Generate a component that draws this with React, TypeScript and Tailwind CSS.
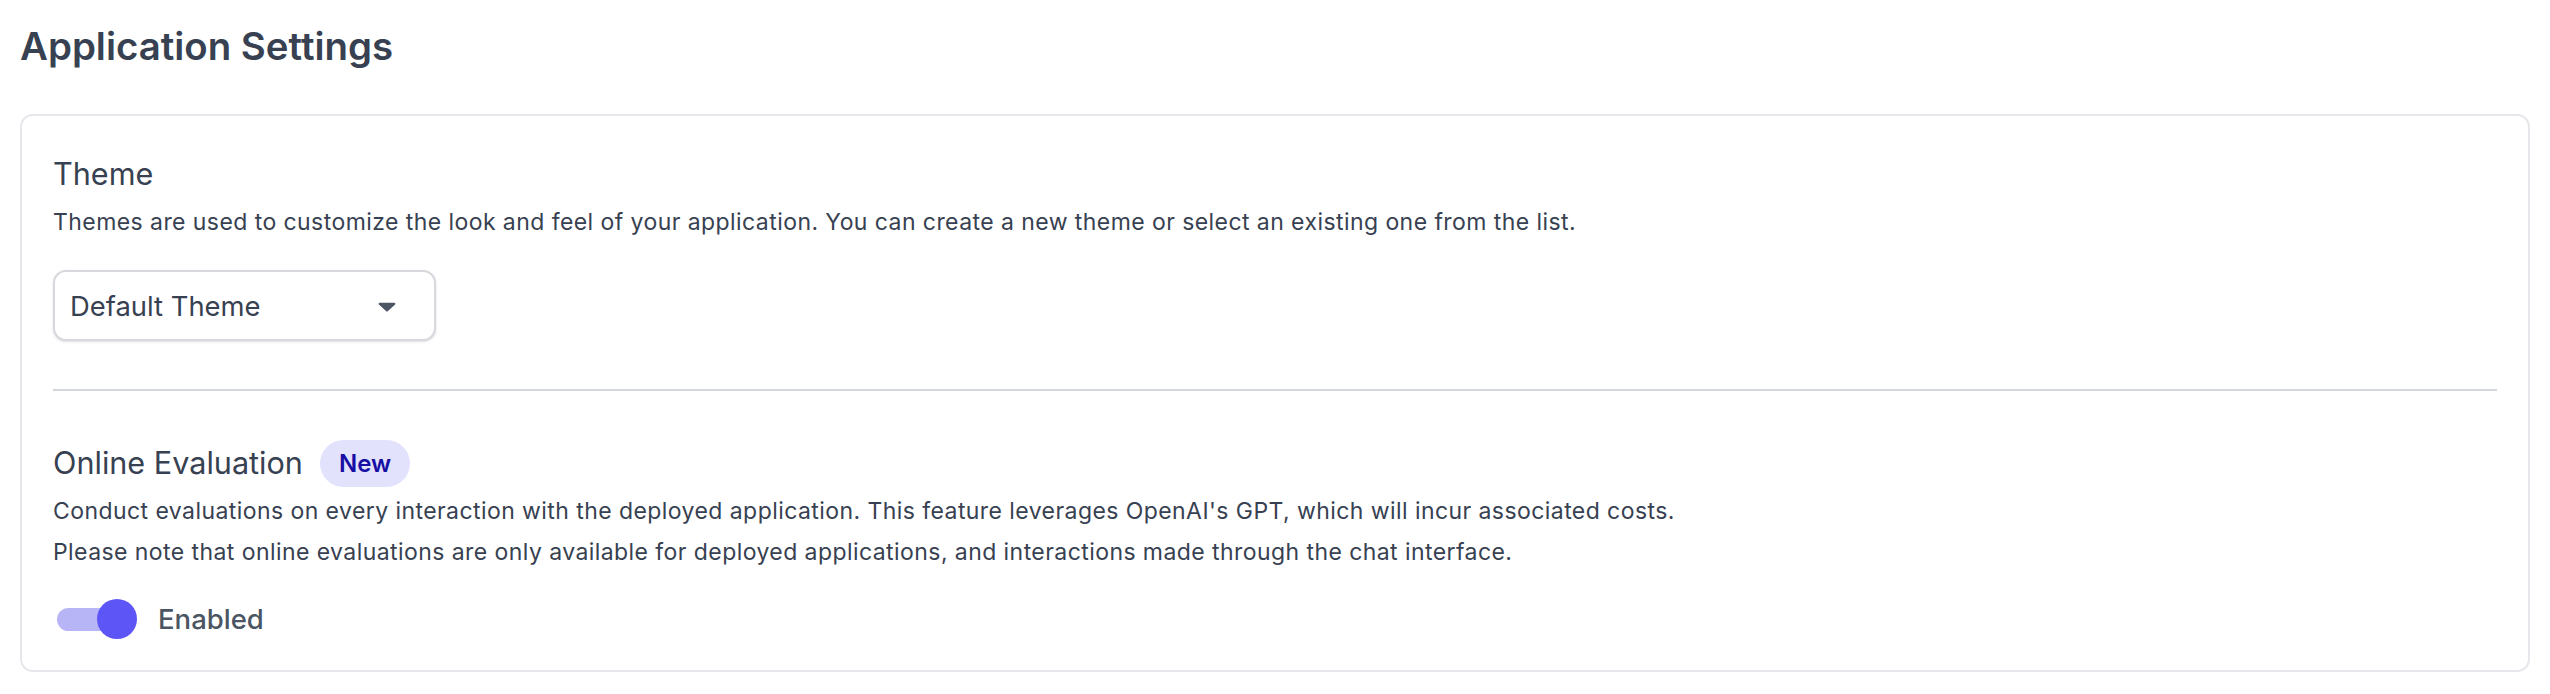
import React from "react";

export default function App() {
  return (
    <div className="min-h-[694px] bg-white px-[20px] pt-[21px] font-['Inter','Noto_Sans',sans-serif] text-[#374151]">
      <h1 className="text-[38.4px] font-semibold leading-[51.2px] text-[#374151]">Application Settings</h1>
      <div className="mt-[42px] rounded-[13px] border-2 border-[#e6e6eb] bg-white px-[31px] pt-[36px] pb-[31px]">
        <h2 className="text-[30.6px] font-normal leading-[44.8px] text-[#374151]">Theme</h2>
        <p className="mt-[5px] text-[23px] leading-[41px] tracking-[0.43px] text-[#374151]">
          Themes are used to customize the look and feel of your application. You can create a new theme or select an existing one from the list.
        </p>
        <button
          type="button"
          className="mt-[27px] flex h-[71px] w-[383px] items-center justify-between rounded-[13px] border-2 border-[#d6d8dd] bg-white pl-[15px] pr-[38px] shadow-sm"
        >
          <span className="text-[27.4px] leading-[40px] text-[#374151]">Default Theme</span>
          <svg width="18" height="10" viewBox="0 0 18 10" className="mt-[3px]">
            <path
              d="M1.6 0.8 H16.4 A1 1 0 0 1 17.1 2.5 L9.7 9.3 A1 1 0 0 1 8.3 9.3 L0.9 2.5 A1 1 0 0 1 1.6 0.8 Z"
              fill="#4b5563"
            />
          </svg>
        </button>
        <div className="mt-[48px] h-[2px] w-full bg-[#d3d6db]" />
        <div className="mt-[49px] flex h-[47px] items-center">
          <h2 className="text-[30.6px] font-normal leading-[44.8px] text-[#374151]">Online Evaluation</h2>
          <span className="ml-[17px] flex h-[47px] items-center rounded-full bg-[#e3e2fd] px-[19px] text-[24px] font-semibold leading-none text-[#170ea3]">
            New
          </span>
        </div>
        <div className="mt-[4px] text-[23px] leading-[41px] tracking-[0.43px] text-[#374151]">
          <p>
            Conduct evaluations on every interaction with the deployed application. This feature leverages OpenAI's GPT, which will incur associated costs.
          </p>
          <p>
            Please note that online evaluations are only available for deployed applications, and interactions made through the chat interface.
          </p>
        </div>
        <div className="mt-[26px] flex h-[40px] items-center">
          <div className="relative ml-[4px] h-[40px] w-[80px]">
            <div className="absolute left-0 top-[8.5px] h-[23px] w-[62px] rounded-full bg-[#b8b5f7]" />
            <div className="absolute left-[40px] top-0 h-[40px] w-[40px] rounded-full bg-[#5d55f5]" />
          </div>
          <span className="ml-[21px] text-[27.5px] font-medium leading-[40px] text-[#4b5563]">Enabled</span>
        </div>
      </div>
    </div>
  );
}
